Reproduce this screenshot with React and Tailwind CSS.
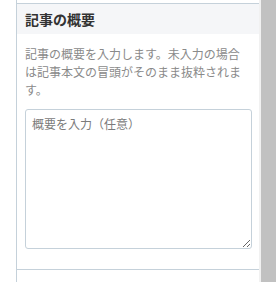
import React from "react";

const font = {
  fontFamily: '"Noto Sans CJK JP", "Noto Sans", sans-serif',
};

const SummaryPanel = () => (
  <div className="w-[243px] border-l border-[#c5d1da] bg-white">
    <div className="h-[4px] border-b border-[#c5d1da]" />
    <div className="flex h-[30px] items-center bg-[#f5f6f8] px-2">
      <h3 className="text-[14px] font-bold text-[#333]">記事の概要</h3>
    </div>
    <div className="px-2 pt-[11px] pb-5">
      <p className="text-[12px] leading-[18px] text-[#8a8a8a]">
        記事の概要を入力します。未入力の場合は記事本文の冒頭がそのまま抜粋されます。
      </p>
      <textarea
        placeholder="概要を入力（任意）"
        className="mt-[10px] block h-[140px] w-[227px] rounded-[3px] border border-[#c5d1da] px-[6px] py-[5px] text-[12px] leading-[18px] text-[#333] placeholder:text-[#7b7b7b] focus:outline-none"
        style={font}
      />
    </div>
    <div className="h-[13px] border-t border-[#c5d1da]" />
  </div>
);

export default function App() {
  return (
    <div className="flex h-[282px] w-[276px] overflow-hidden bg-white" style={font}>
      <div className="w-[16px]" />
      <SummaryPanel />
      <div className="flex w-[17px] bg-[#f1f1f1] pl-[2px]">
        <div className="w-[15px] bg-[#c1c1c1]" />
      </div>
    </div>
  );
}
